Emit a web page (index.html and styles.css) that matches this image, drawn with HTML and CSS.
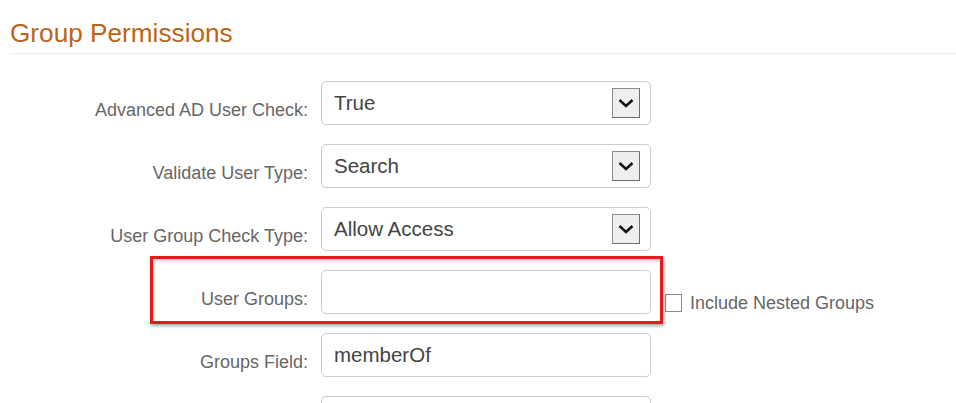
FILE: index.html
```html
<!DOCTYPE html>
<html lang="en">
<head>
<meta charset="utf-8">
<title>Group Permissions</title>
<link rel="stylesheet" href="styles.css">
</head>
<body>
<div class="page">
  <h2 class="section-title">Group Permissions</h2>
  <div class="form">
    <div class="row">
      <label class="label">Advanced AD User Check:</label>
      <div class="control select">
        <span class="value">True</span>
        <span class="arrow"><svg width="26" height="28" viewBox="0 0 26 28"><polyline points="6.5,11 13,17 19.5,11" fill="none" stroke="#111" stroke-width="2.5"/></svg></span>
      </div>
    </div>
    <div class="row">
      <label class="label">Validate User Type:</label>
      <div class="control select">
        <span class="value">Search</span>
        <span class="arrow"><svg width="26" height="28" viewBox="0 0 26 28"><polyline points="6.5,11 13,17 19.5,11" fill="none" stroke="#111" stroke-width="2.5"/></svg></span>
      </div>
    </div>
    <div class="row">
      <label class="label">User Group Check Type:</label>
      <div class="control select">
        <span class="value">Allow Access</span>
        <span class="arrow"><svg width="26" height="28" viewBox="0 0 26 28"><polyline points="6.5,11 13,17 19.5,11" fill="none" stroke="#111" stroke-width="2.5"/></svg></span>
      </div>
    </div>
    <div class="row highlighted">
      <label class="label">User Groups:</label>
      <div class="control input"><span class="value"></span></div>
      <div class="extra">
        <span class="checkbox"></span>
        <span class="check-label">Include Nested Groups</span>
      </div>
      <div class="annotation"></div>
    </div>
    <div class="row">
      <label class="label">Groups Field:</label>
      <div class="control input"><span class="value">memberOf</span></div>
    </div>
    <div class="row">
      <label class="label"></label>
      <div class="control input"><span class="value"></span></div>
    </div>
  </div>
</div>
</body>
</html>
```

FILE: styles.css
```css
html, body {
  margin: 0;
  padding: 0;
  background: #ffffff;
  height: 403px;
  overflow: hidden;
}

.page {
  font-family: "Liberation Sans", Arial, sans-serif;
  height: 403px;
  overflow: hidden;
}

.section-title {
  margin: 0 0 0 10px;
  padding: 18px 0 5px 0;
  font-size: 26.2px;
  line-height: 30px;
  font-weight: normal;
  color: #bb6419;
  border-bottom: 1px solid #ececec;
}

.form {
  margin-top: 27px;
  display: flex;
  flex-direction: column;
  gap: 19px;
}

.row {
  position: relative;
  display: grid;
  grid-template-columns: 308px 330px auto;
  column-gap: 13px;
  height: 44px;
}

.label {
  align-self: end;
  text-align: right;
  font-size: 18px;
  line-height: 22px;
  padding-bottom: 4px;
  color: #666666;
}

.control {
  box-sizing: border-box;
  height: 44px;
  border: 1px solid #cccccc;
  border-radius: 5px;
  background: #ffffff;
  display: flex;
  align-items: center;
  padding-left: 12px;
}

.value {
  flex: 1;
  font-size: 20.5px;
  color: #444444;
}

.select {
  padding-right: 10px;
}

.arrow {
  box-sizing: border-box;
  width: 28px;
  height: 30px;
  background: #efefef;
  border: 1px solid #8c8c8c;
  border-right-color: #6e6e6e;
  border-bottom-color: #6e6e6e;
  display: flex;
}

.arrow svg {
  display: block;
}

.extra {
  display: flex;
  align-items: flex-end;
  padding-bottom: 2px;
  margin-left: 1px;
}

.checkbox {
  box-sizing: border-box;
  width: 17px;
  height: 18px;
  border: 1px solid #8a8a8a;
  background: #ffffff;
  margin-right: 8px;
}

.check-label {
  font-size: 18px;
  line-height: 20px;
  color: #666666;
  position: relative;
  top: 1px;
}

.annotation {
  position: absolute;
  left: 150px;
  top: -14px;
  width: 513px;
  height: 68px;
  box-sizing: border-box;
  border: 3px solid #e51b1b;
  box-shadow: 1px 2px 3px rgba(0, 0, 0, 0.35), inset 1px 2px 3px rgba(0, 0, 0, 0.2);
  pointer-events: none;
}
```
